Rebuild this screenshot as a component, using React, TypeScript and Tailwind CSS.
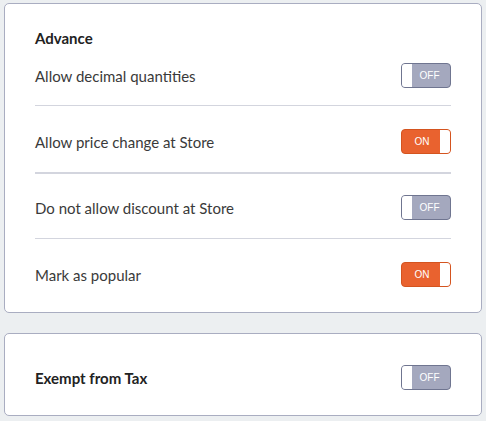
import { useState } from 'react';

interface ToggleProps {
  on: boolean;
  onChange: () => void;
}

function Toggle({ on, onChange }: ToggleProps) {
  return (
    <button
      onClick={onChange}
      className={`flex h-[25px] w-[50px] shrink-0 items-stretch overflow-hidden rounded-[4px] border ${
        on ? 'flex-row-reverse border-[#d4541f] bg-[#e9622f]' : 'border-[#6f7590] bg-[#a4a8be]'
      }`}
    >
      <span className="w-[10px] bg-white" />
      <span
        className={`flex flex-1 items-center justify-center font-['Liberation_Sans',Arial,sans-serif] text-[10px] text-white ${
          on ? 'pl-[2px]' : 'pr-[3px]'
        }`}
      >
        {on ? 'ON' : 'OFF'}
      </span>
    </button>
  );
}

interface Row {
  label: string;
  on: boolean;
  cls: string;
}

export default function App() {
  const [rows, setRows] = useState<Row[]>([
    { label: 'Allow decimal quantities', on: false, cls: 'pt-[15px] pb-[17px] border-b border-[#d3d5de]' },
    { label: 'Allow price change at Store', on: true, cls: 'pt-[23px] pb-[18px] border-b-2 border-[#d3d5de]' },
    { label: 'Do not allow discount at Store', on: false, cls: 'pt-[21px] pb-[18px] border-b border-[#d3d5de]' },
    { label: 'Mark as popular', on: true, cls: 'pt-[23px] pb-[25px]' },
  ]);
  const [exempt, setExempt] = useState(false);

  const toggle = (i: number) =>
    setRows(rs => rs.map((r, idx) => (idx === i ? { ...r, on: !r.on } : r)));

  return (
    <div className="min-h-[421px] w-[486px] bg-[#eceff1] px-[4px] pt-[3px] font-['Lato','Noto_Sans',sans-serif] text-[#3a3a3a]">
      <div className="rounded-[5px] border border-[#a9adc1] bg-white px-[30px] pt-[24px]">
        <h3 className="text-[15px] leading-[20px] font-bold text-[#222]">Advance</h3>
        {rows.map((r, i) => (
          <div key={r.label} className={`flex items-center justify-between ${r.cls}`}>
            <span className="text-[15px] leading-[20px]">{r.label}</span>
            <Toggle on={r.on} onChange={() => toggle(i)} />
          </div>
        ))}
      </div>

      <div className="mt-[20px] flex items-center justify-between rounded-[5px] border border-[#a9adc1] bg-white px-[30px] pt-[31px] pb-[25px]">
        <span className="text-[15px] leading-[20px] font-bold text-[#222]">Exempt from Tax</span>
        <Toggle on={exempt} onChange={() => setExempt(e => !e)} />
      </div>
    </div>
  );
}
